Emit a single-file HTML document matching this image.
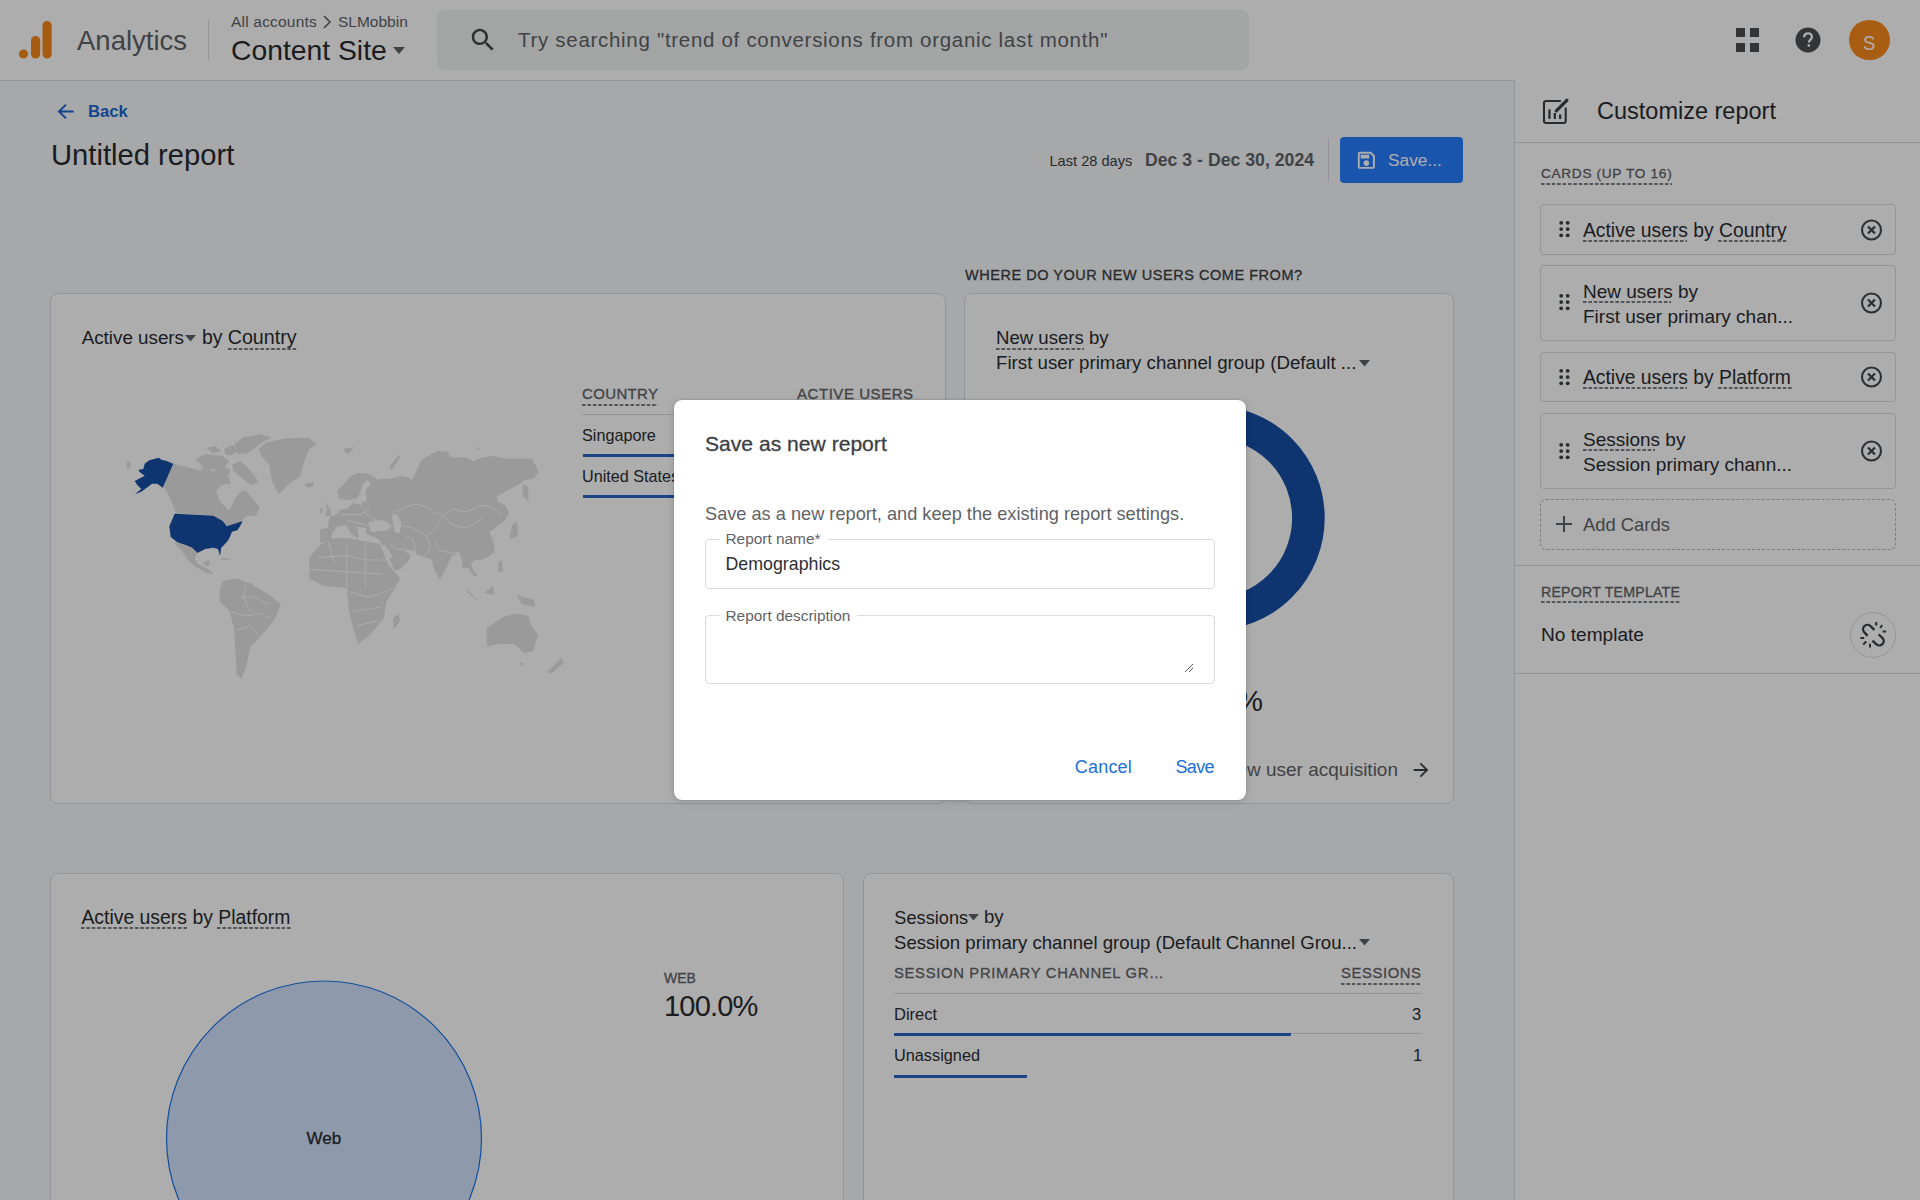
<!DOCTYPE html><html><head><meta charset="utf-8"><style>
html,body{margin:0;padding:0}
body{width:1920px;height:1200px;overflow:hidden;position:relative;background:#f7f8fb;font-family:"Liberation Sans",sans-serif}
.a{position:absolute;box-sizing:border-box}
.t{position:absolute;line-height:1;white-space:nowrap}
.dash{background-image:linear-gradient(to right,#7b7f84 3.2px,transparent 3.2px);background-size:5.4px 2px;background-repeat:repeat-x;height:2px;position:absolute}
.m{-webkit-text-stroke:0.3px currentColor}
</style></head><body>
<div class="a" style="left:0px;top:0px;width:1920px;height:81px;background:#fff;border-bottom:1px solid #dadce0"></div>
<svg class="a" style="left:0;top:0" width="60" height="80"><g fill="#f7891a"><circle cx="23.5" cy="54" r="4.6"/><rect x="31" y="36" width="9.2" height="22.5" rx="4.6"/><rect x="42.5" y="21" width="9.2" height="37.5" rx="4.6"/></g></svg>
<div class="t " style="left:77.0px;top:27.32px;font-size:27.5px;color:#5f6368;">Analytics</div>
<div class="a" style="left:208px;top:20px;width:1px;height:40px;background:#dadce0"></div>
<div class="t " style="left:231.0px;top:14.48px;font-size:15.5px;color:#5f6368;letter-spacing:0.2px;">All accounts</div>
<svg class="a" style="left:321px;top:14px" width="12" height="16"><path d="M3 2 L9 8 L3 14" fill="none" stroke="#5f6368" stroke-width="1.6"/></svg>
<div class="t " style="left:338.0px;top:14.48px;font-size:15.5px;color:#5f6368;">SLMobbin</div>
<div class="t " style="left:231.0px;top:36.04px;font-size:28.3px;color:#2a2c30;">Content Site</div>
<svg class="a" style="left:393px;top:47px" width="14" height="8"><path d="M0 0 L12 0 L6 7 Z" fill="#5f6368"/></svg>
<div class="a" style="left:437px;top:10px;width:812px;height:60px;background:#f1f3f4;border-radius:8px"></div>
<svg class="a" style="left:467.5px;top:25px" width="30" height="30" viewBox="0 0 24 24"><path fill="#444746" d="M15.5 14h-.79l-.28-.27C15.41 12.59 16 11.11 16 9.5 16 5.91 13.09 3 9.5 3S3 5.91 3 9.5 5.91 16 9.5 16c1.61 0 3.09-.59 4.23-1.57l.27.28v.79l5 4.99L20.49 19l-4.99-5zm-6 0C7.01 14 5 11.99 5 9.5S7.01 5 9.5 5 14 7.01 14 9.5 11.99 14 9.5 14z"/></svg>
<div class="t " style="left:518.0px;top:30.25px;font-size:20.5px;color:#5f6368;letter-spacing:0.7px;">Try searching "trend of conversions from organic last month"</div>
<div class="a" style="left:1736px;top:28px;width:9px;height:9px;background:#4a4d50"></div>
<div class="a" style="left:1750px;top:28px;width:9px;height:9px;background:#4a4d50"></div>
<div class="a" style="left:1736px;top:43px;width:9px;height:9px;background:#4a4d50"></div>
<div class="a" style="left:1750px;top:43px;width:9px;height:9px;background:#4a4d50"></div>
<svg class="a" style="left:1795px;top:27px" width="26" height="26" viewBox="0 0 26 26"><circle cx="13" cy="13" r="12.5" fill="#4a4d50"/><path d="M9.2 10.3 C9.2 7.8 11 6.4 13.1 6.4 C15.3 6.4 16.9 7.9 16.9 9.9 C16.9 12.5 13.9 12.7 13.9 15.6" fill="none" stroke="#fff" stroke-width="2.4"/><rect x="12.6" y="17.3" width="2.4" height="2.4" fill="#fff"/></svg>
<div class="a" style="left:1849px;top:19.8px;width:40.5px;height:40.5px;border-radius:50%;background:#f98a1b"></div>
<div class="t " style="left:1863.0px;top:31.82px;font-size:21px;color:#fff;transform:scaleX(0.88);transform-origin:left">S</div>
<svg class="a" style="left:0;top:90px" width="90" height="40"><path d="M73.6 21.5 H59.5 M66 14.6 L59 21.5 L66 28.4" fill="none" stroke="#1967d2" stroke-width="2"/></svg>
<div class="t " style="left:88.0px;top:103.76px;font-size:16.7px;color:#1967d2;font-weight:700;">Back</div>
<div class="t " style="left:51.0px;top:140.88px;font-size:29.2px;color:#2a2c30;">Untitled report</div>
<div class="t " style="left:1049.5px;top:153.84px;font-size:14.6px;color:#3c4043;">Last 28 days</div>
<div class="t " style="left:1145.0px;top:151.62px;font-size:17.7px;color:#5f6368;font-weight:700;">Dec 3 - Dec 30, 2024</div>
<div class="a" style="left:1328px;top:138px;width:1px;height:44px;background:#dadce0"></div>
<div class="a" style="left:1340px;top:137px;width:123px;height:46px;background:#267dff;border-radius:4px"></div>
<svg class="a" style="left:1355px;top:148.9px" width="22.7" height="22.7" viewBox="0 0 24 24"><path fill="#fff" d="M17 3H5c-1.11 0-2 .9-2 2v14c0 1.1.89 2 2 2h14c1.1 0 2-.9 2-2V7l-4-4zm2 16H5V5h11.17L19 7.83V19zm-7-7c-1.66 0-3 1.34-3 3s1.34 3 3 3 3-1.34 3-3-1.34-3-3-3zM6 6h9v4H6z"/></svg>
<div class="t " style="left:1388.0px;top:151.56px;font-size:17.3px;color:#fff;">Save...</div>
<div class="t m" style="left:965.0px;top:267.73px;font-size:14.5px;color:#3c4043;letter-spacing:0.53px;">WHERE DO YOUR NEW USERS COME FROM?</div>
<div class="a" style="left:50px;top:293px;width:896px;height:511px;background:#fff;border:1px solid #dadce0;border-radius:8px"></div>
<div class="a" style="left:964px;top:293px;width:490px;height:511px;background:#fff;border:1px solid #dadce0;border-radius:8px"></div>
<div class="a" style="left:50px;top:873px;width:794px;height:400px;background:#fff;border:1px solid #dadce0;border-radius:8px"></div>
<div class="a" style="left:863px;top:873px;width:591px;height:400px;background:#fff;border:1px solid #dadce0;border-radius:8px"></div>
<div class="t " style="left:81.7px;top:328.69px;font-size:18.8px;color:#2a2c30;">Active users</div>
<svg class="a" style="left:185px;top:335px" width="12" height="7"><path d="M0 0 L11 0 L5.5 6.5Z" fill="#5f6368"/></svg>
<div class="t " style="left:202.0px;top:328.18px;font-size:19.4px;color:#2a2c30;">by</div>
<div class="t " style="left:227.7px;top:327.92px;font-size:19.7px;color:#2a2c30;">Country</div>
<div class="dash" style="left:228px;top:348px;width:69px"></div>
<div class="t m" style="left:582.0px;top:385.90px;font-size:15px;color:#5f6368;letter-spacing:0.35px;">COUNTRY</div>
<div class="dash" style="left:582px;top:404px;width:76px"></div>
<div class="t m" style="left:797.0px;top:385.90px;font-size:15px;color:#5f6368;letter-spacing:0.55px;">ACTIVE USERS</div>
<div class="a" style="left:582px;top:414px;width:332px;height:1px;background:#dadce0"></div>
<div class="t " style="left:582.0px;top:426.89px;font-size:16.2px;color:#2a2c30;">Singapore</div>
<div class="a" style="left:582px;top:454px;width:332px;height:1px;background:#dadce0"></div>
<div class="a" style="left:583px;top:453.5px;width:331px;height:3px;background:#2863c4"></div>
<div class="t " style="left:582.0px;top:467.89px;font-size:16.2px;color:#2a2c30;">United States</div>
<div class="a" style="left:583px;top:494.5px;width:331px;height:3px;background:#2863c4"></div>
<svg class="a" style="left:0;top:0" width="1920" height="1200"><polygon points="173.3,463.7 184.0,466.3 194.7,469.0 200.0,470.3 205.3,467.7 213.3,471.7 221.3,475.7 229.3,477.0 230.7,483.7 221.3,485.0 216.0,491.7 220.0,502.3 229.3,510.3 234.7,499.7 240.0,491.7 245.3,490.3 253.3,499.7 260.0,507.7 256.0,515.7 246.7,515.7 240.0,522.3 234.7,526.3 226.7,526.3 222.7,521.0 213.3,515.7 176.0,513.0 170.7,499.7 165.3,489.0 162.7,487.7" fill="#e3e3e3"/><polygon points="232.0,465.0 240.0,461.0 248.0,467.7 254.7,475.7 258.7,482.3 252.0,485.0 245.3,481.0 237.3,474.3 233.3,470.3" fill="#e3e3e3"/><polygon points="194.7,459.7 205.3,454.3 221.3,455.7 229.3,461.0 224.0,469.0 213.3,469.0 202.7,465.0" fill="#e3e3e3"/><polygon points="234.7,443.7 244.0,437.0 261.3,434.3 270.7,437.7 258.7,445.0 248.0,453.0 237.3,454.3" fill="#e3e3e3"/><polygon points="206.7,447.7 216.0,446.3 221.3,451.7 212.0,453.0" fill="#e3e3e3"/><polygon points="213.3,470.3 221.3,466.3 230.7,469.7 228.0,476.3 217.3,476.3" fill="#e3e3e3"/><polygon points="200.0,465.0 210.7,463.7 214.0,469.0 205.3,471.0" fill="#e3e3e3"/><polygon points="224.0,449.0 233.3,445.0 237.3,451.7 230.7,455.7 225.3,454.3" fill="#e3e3e3"/><polygon points="258.7,449.0 266.7,442.3 286.7,438.3 308.0,437.7 317.3,443.7 309.3,449.0 304.0,462.3 300.0,477.0 290.7,482.3 278.7,494.3 272.0,481.0 269.3,465.0 261.3,455.7" fill="#e3e3e3"/><polygon points="305.3,483.7 313.3,482.3 313.3,486.3 306.7,487.7" fill="#e3e3e3"/><polygon points="126.7,461.0 130.7,462.3 130.0,469.0 126.7,467.7" fill="#e3e3e3"/><polygon points="134.7,481.0 140.0,478.3 144.7,475.7 139.3,471.7 138.7,469.7 143.3,469.0 144.7,463.7 149.3,460.3 158.7,457.7 161.3,459.7 166.7,461.0 173.3,463.7 162.7,487.7 157.3,483.7 152.0,483.7 146.7,487.7 141.3,491.7 134.7,494.3 141.3,489.0 137.3,485.0" fill="#174ea6"/><polygon points="174.7,513.7 176.0,513.7 213.3,515.7 222.7,521.0 226.7,526.3 234.7,523.7 242.7,521.0 240.0,526.3 237.3,530.3 232.0,531.7 229.3,538.3 226.7,542.3 221.3,547.7 220.0,555.7 218.0,549.0 213.3,547.7 205.3,549.0 197.3,553.0 192.0,547.7 185.3,545.0 177.3,542.3 170.7,537.0 169.3,526.3" fill="#174ea6"/><polygon points="173.3,542.3 185.3,545.0 192.0,547.7 197.3,553.0 194.7,558.3 197.3,563.7 202.7,566.3 208.0,569.0 213.3,574.3 206.7,573.0 194.7,566.3 186.7,558.3 181.3,550.3" fill="#e3e3e3"/><polygon points="202.7,563.7 208.0,559.7 210.7,563.7 206.7,566.3" fill="#e3e3e3"/><polygon points="222.7,581.0 236.6,578.6 250.6,583.3 269.3,595.0 281.0,604.3 274.0,620.6 260.0,637.0 250.6,646.3 246.0,667.3 241.3,679.0 236.6,674.3 235.5,653.3 234.3,630.0 229.6,611.3 220.3,602.0 219.2,592.6" fill="#e3e3e3"/><polygon points="222.7,557.6 232.0,560.0 220.3,560.0" fill="#e3e3e3"/><polyline points="229.6,611.3 246.0,616.0 260.0,613.6 271.6,618.3" fill="none" stroke="#fff" stroke-width="0.9" stroke-linejoin="round"/><polyline points="236.6,630.0 250.6,625.3 260.0,637.0" fill="none" stroke="#fff" stroke-width="0.9" stroke-linejoin="round"/><polyline points="241.3,597.3 255.3,597.3 269.3,604.3" fill="none" stroke="#fff" stroke-width="0.9" stroke-linejoin="round"/><polyline points="246.0,583.3 243.6,597.3 250.6,611.3" fill="none" stroke="#fff" stroke-width="0.9" stroke-linejoin="round"/><polygon points="320.0,542.7 320.0,529.3 328.0,528.0 329.3,517.3 337.3,514.0 340.0,509.3 346.7,508.7 352.0,504.0 356.0,498.7 346.7,500.0 338.7,498.7 337.3,490.7 344.0,484.0 349.3,477.3 357.3,472.7 365.3,473.3 373.3,476.0 377.3,480.0 382.7,478.7 389.3,478.7 400.0,476.0 408.0,477.3 412.0,480.0 416.0,472.0 421.3,460.0 437.3,450.7 448.0,452.0 450.7,457.3 466.7,457.3 473.3,461.3 482.7,457.3 493.3,456.0 506.7,458.7 522.7,458.7 532.0,458.7 538.7,472.0 533.3,478.7 525.3,480.0 517.3,485.3 512.0,488.0 497.3,496.0 497.3,501.3 505.3,505.3 509.3,513.3 504.0,521.3 496.0,526.7 489.3,532.0 493.3,541.3 494.7,552.0 488.0,557.3 480.0,560.0 474.7,560.0 470.7,564.0 473.3,570.7 477.3,574.7 474.7,577.3 468.0,568.0 462.7,568.0 461.3,557.3 458.7,553.3 452.0,556.0 446.7,566.7 440.0,580.0 433.3,568.0 432.0,560.0 425.3,557.3 417.3,554.7 410.7,554.7 409.3,560.0 400.0,569.3 394.7,570.7 389.3,558.7 381.3,545.3 373.3,546.7 360.0,546.7 344.0,544.0 332.0,541.3" fill="#e3e3e3"/><polygon points="353.3,504.0 360.0,493.3 362.7,484.0 368.0,480.0 370.7,484.0 365.3,490.7 366.7,498.7 362.7,502.7 358.7,504.0" fill="#fff"/><polygon points="332.0,541.3 332.0,533.3 337.3,526.7 346.7,525.3 350.7,533.3 358.7,538.7 357.3,526.7 366.7,528.0 365.3,533.3 380.0,540.0 381.3,545.3 360.0,546.7 344.0,544.0" fill="#fff"/><polygon points="368.0,522.7 376.0,520.0 386.7,521.3 392.0,526.7 386.7,530.7 370.7,532.0" fill="#fff"/><polygon points="392.0,514.7 397.3,514.7 401.3,522.7 400.0,533.3 394.7,532.0 393.3,525.3" fill="#fff"/><polygon points="405.3,549.3 413.3,550.7 417.3,554.7 410.7,554.7 405.3,552.0" fill="#fff"/><polygon points="381.3,545.3 389.3,558.7 392.7,556.7 384.7,544.7" fill="#fff"/><polygon points="325.3,501.3 330.7,510.7 330.7,516.0 325.3,516.0 326.7,509.3" fill="#e3e3e3"/><polygon points="320.0,509.3 322.7,508.0 322.7,513.3 320.0,513.3" fill="#e3e3e3"/><polygon points="389.3,466.7 398.7,454.7 400.7,456.7 392.0,470.0" fill="#e3e3e3"/><polygon points="342.7,449.3 354.7,446.7 348.0,454.7" fill="#e3e3e3"/><polygon points="476.0,447.3 482.0,448.0 478.7,450.0" fill="#e3e3e3"/><polygon points="522.7,484.0 528.0,486.7 528.7,501.3 522.7,496.0" fill="#e3e3e3"/><polygon points="512.0,525.3 516.7,521.3 518.0,536.0 509.3,539.3" fill="#e3e3e3"/><polyline points="390.7,514.7 394.7,512.0 406.7,506.7 416.0,504.0 426.7,506.7 433.3,512.0 442.7,514.7" fill="none" stroke="#fff" stroke-width="0.9" stroke-linejoin="round"/><polyline points="442.7,514.7 453.3,509.3 466.7,512.0 480.0,505.3 490.7,506.7 501.3,514.7" fill="none" stroke="#fff" stroke-width="0.9" stroke-linejoin="round"/><polyline points="442.7,516.0 453.3,525.3 466.7,528.0 480.0,520.0 482.7,517.3" fill="none" stroke="#fff" stroke-width="0.9" stroke-linejoin="round"/><polyline points="442.7,516.0 437.3,525.3 430.7,533.3 426.7,536.0" fill="none" stroke="#fff" stroke-width="0.9" stroke-linejoin="round"/><polyline points="402.7,525.3 413.3,528.0 421.3,533.3 426.7,536.0" fill="none" stroke="#fff" stroke-width="0.9" stroke-linejoin="round"/><polyline points="434.7,541.3 440.0,550.7 453.3,553.3 460.0,552.0" fill="none" stroke="#fff" stroke-width="0.9" stroke-linejoin="round"/><polyline points="426.7,536.0 430.7,546.7 425.3,556.0" fill="none" stroke="#fff" stroke-width="0.9" stroke-linejoin="round"/><polyline points="405.3,536.0 413.3,540.0 416.0,554.7" fill="none" stroke="#fff" stroke-width="0.9" stroke-linejoin="round"/><polyline points="389.3,541.3 394.7,549.3 405.3,549.3" fill="none" stroke="#fff" stroke-width="0.9" stroke-linejoin="round"/><polyline points="340.0,514.7 360.0,514.7 370.7,509.3" fill="none" stroke="#fff" stroke-width="0.9" stroke-linejoin="round"/><polyline points="346.7,520.0 366.7,525.3" fill="none" stroke="#fff" stroke-width="0.9" stroke-linejoin="round"/><polyline points="360.0,502.7 366.7,514.7 376.0,520.0" fill="none" stroke="#fff" stroke-width="0.9" stroke-linejoin="round"/><polyline points="365.3,490.7 365.3,502.7" fill="none" stroke="#fff" stroke-width="0.9" stroke-linejoin="round"/><polygon points="309.3,557.7 318.7,546.0 330.3,539.0 346.7,537.8 365.3,541.3 379.3,543.7 388.7,564.7 400.3,578.7 393.3,590.3 386.3,602.0 384.0,618.3 370.0,634.7 358.3,644.0 353.7,630.0 349.0,611.3 346.7,588.0 323.3,585.7 309.3,578.7" fill="#e3e3e3"/><polygon points="393.3,618.3 398.0,613.7 400.3,620.7 393.3,630.0" fill="#e3e3e3"/><polygon points="465.7,588.0 477.3,599.7 482.0,604.3 468.0,592.7" fill="#e3e3e3"/><polygon points="484.3,592.7 493.7,585.7 493.7,595.0" fill="#e3e3e3"/><polygon points="517.0,595.0 533.3,599.7 535.7,606.7 521.7,604.3" fill="#e3e3e3"/><polygon points="498.3,562.3 501.8,560.0 503.0,571.7 498.3,571.7" fill="#e3e3e3"/><polygon points="486.7,627.7 505.3,616.0 517.0,613.7 528.7,616.0 531.0,625.3 538.0,634.7 533.3,651.0 524.0,653.3 514.7,644.0 500.7,644.0 486.7,646.3" fill="#e3e3e3"/><polygon points="547.3,672.0 561.3,658.0 563.7,662.7 552.0,673.2" fill="#e3e3e3"/><polygon points="519.3,662.7 523.5,662.7 521.7,667.3" fill="#e3e3e3"/><polyline points="318.7,557.7 346.7,555.3 365.3,560.0 388.7,560.0" fill="none" stroke="#fff" stroke-width="0.9" stroke-linejoin="round"/><polyline points="309.3,569.3 346.7,571.7 381.7,574.0" fill="none" stroke="#fff" stroke-width="0.9" stroke-linejoin="round"/><polyline points="346.7,546.0 346.7,588.0" fill="none" stroke="#fff" stroke-width="0.9" stroke-linejoin="round"/><polyline points="365.3,541.3 365.3,588.0" fill="none" stroke="#fff" stroke-width="0.9" stroke-linejoin="round"/><polyline points="335.0,588.0 370.0,597.3 393.3,588.0" fill="none" stroke="#fff" stroke-width="0.9" stroke-linejoin="round"/><polyline points="353.7,611.3 381.7,606.7" fill="none" stroke="#fff" stroke-width="0.9" stroke-linejoin="round"/><polyline points="358.3,625.3 379.3,620.7" fill="none" stroke="#fff" stroke-width="0.9" stroke-linejoin="round"/><polyline points="328.0,541.3 335.0,564.7" fill="none" stroke="#fff" stroke-width="0.9" stroke-linejoin="round"/></svg>
<div class="t " style="left:996.0px;top:328.86px;font-size:18.6px;color:#2a2c30;">New users by</div>
<div class="dash" style="left:996px;top:348px;width:88px"></div>
<div class="t " style="left:996.0px;top:354.47px;font-size:18.7px;color:#2a2c30;">First user primary channel group (Default ...</div>
<svg class="a" style="left:1359px;top:360px" width="12" height="7"><path d="M0 0 L11 0 L5.5 6.5Z" fill="#5f6368"/></svg>
<svg class="a" style="left:0;top:0" width="1920" height="1200"><circle cx="1212.2" cy="518" r="96.2" fill="none" stroke="#174ea6" stroke-width="32.6"/></svg>
<div class="t " style="right:657.0px;top:685.93px;font-size:29.5px;color:#2a2c30;">100.0%</div>
<div class="t " style="right:522.0px;top:759.52px;font-size:19px;color:#5f6368;">View new user acquisition</div>
<svg class="a" style="left:1410px;top:759px" width="22" height="22" viewBox="0 0 24 24"><path fill="#3c4043" d="M12 4l-1.41 1.41L16.17 11H4v2h12.17l-5.58 5.59L12 20l8-8z"/></svg>
<div class="t " style="left:81.4px;top:908.18px;font-size:19.4px;color:#2a2c30;">Active users by Platform</div>
<div class="dash" style="left:81px;top:927px;width:106px"></div>
<div class="dash" style="left:217px;top:927px;width:74px"></div>
<div class="t m" style="left:664.0px;top:971.35px;font-size:14px;color:#5f6368;">WEB</div>
<div class="t " style="left:664.0px;top:991.55px;font-size:29px;color:#2a2c30;letter-spacing:-0.8px;">100.0%</div>
<svg class="a" style="left:0;top:0" width="1920" height="1200"><circle cx="324" cy="1138.5" r="157.5" fill="#d2e3fc" stroke="#1a73e8" stroke-width="1.2"/></svg>
<div class="t m" style="left:306.5px;top:1130.21px;font-size:17px;color:#2a2c30;">Web</div>
<div class="t " style="left:894.3px;top:908.69px;font-size:18.2px;color:#2a2c30;">Sessions</div>
<svg class="a" style="left:968px;top:914px" width="12" height="7"><path d="M0 0 L11 0 L5.5 6.5Z" fill="#5f6368"/></svg>
<div class="t " style="left:984.0px;top:908.36px;font-size:18.6px;color:#2a2c30;">by</div>
<div class="t " style="left:894.0px;top:933.86px;font-size:18.6px;color:#2a2c30;">Session primary channel group (Default Channel Grou...</div>
<svg class="a" style="left:1359px;top:939px" width="12" height="7"><path d="M0 0 L11 0 L5.5 6.5Z" fill="#5f6368"/></svg>
<div class="t m" style="left:894.0px;top:965.77px;font-size:14.8px;color:#5f6368;letter-spacing:0.68px;">SESSION PRIMARY CHANNEL GR…</div>
<div class="t m" style="left:1341.0px;top:965.77px;font-size:14.8px;color:#5f6368;letter-spacing:0.61px;">SESSIONS</div>
<div class="dash" style="left:1341px;top:983px;width:80px"></div>
<div class="a" style="left:894px;top:993px;width:528px;height:1px;background:#dadce0"></div>
<div class="t " style="left:894.0px;top:1006.43px;font-size:16.5px;color:#2a2c30;">Direct</div>
<div class="t " style="left:1412.0px;top:1006.43px;font-size:16.5px;color:#2a2c30;">3</div>
<div class="a" style="left:894px;top:1033px;width:528px;height:1px;background:#dadce0"></div>
<div class="a" style="left:894px;top:1033px;width:397px;height:3px;background:#2863c4"></div>
<div class="t " style="left:894.0px;top:1047.40px;font-size:16.3px;color:#2a2c30;">Unassigned</div>
<div class="t " style="left:1413.0px;top:1047.23px;font-size:16.5px;color:#2a2c30;">1</div>
<div class="a" style="left:894px;top:1074.5px;width:133px;height:3px;background:#2863c4"></div>
<div class="a" style="left:1514px;top:80px;width:406px;height:1120px;background:#fff;border-left:1px solid #dadce0"></div>
<svg class="a" style="left:1535px;top:90px" width="45" height="45"><path d="M25.9 11 H11 A2 2 0 0 0 9 13 V31 A2 2 0 0 0 11 33 H28.7 A2 2 0 0 0 30.7 31 V17.5" fill="none" stroke="#3c4043" stroke-width="2.1"/><g fill="#3c4043"><rect x="13.3" y="19.4" width="2.3" height="9.5"/><rect x="18.7" y="23" width="2.3" height="5.9"/><rect x="24" y="24.4" width="2.3" height="4.5"/></g><path d="M21.3 20.9 L29.3 12.9 M30.3 11.9 L31.9 10.3" stroke="#3c4043" stroke-width="3.2" stroke-linecap="round"/></svg>
<div class="t " style="left:1597.0px;top:99.91px;font-size:23.5px;color:#2a2c30;">Customize report</div>
<div class="a" style="left:1515px;top:142px;width:405px;height:1px;background:#dadce0"></div>
<div class="t m" style="left:1541.0px;top:167.30px;font-size:13.7px;color:#5f6368;letter-spacing:0.65px;">CARDS (UP TO 16)</div>
<div class="dash" style="left:1541px;top:183px;width:131px"></div>
<div class="a" style="left:1540px;top:204px;width:356px;height:51px;border:1px solid #dadce0;border-radius:4px"></div>
<div class="a" style="left:1540px;top:265px;width:356px;height:76px;border:1px solid #dadce0;border-radius:4px"></div>
<div class="a" style="left:1540px;top:352px;width:356px;height:50px;border:1px solid #dadce0;border-radius:4px"></div>
<div class="a" style="left:1540px;top:413px;width:356px;height:76px;border:1px solid #dadce0;border-radius:4px"></div>
<svg class="a" style="left:0;top:0" width="1920" height="1200"><circle cx="1561.2" cy="222.8" r="1.9" fill="#3c4043"/><circle cx="1567.7" cy="222.8" r="1.9" fill="#3c4043"/><circle cx="1561.2" cy="229.1" r="1.9" fill="#3c4043"/><circle cx="1567.7" cy="229.1" r="1.9" fill="#3c4043"/><circle cx="1561.2" cy="235.3" r="1.9" fill="#3c4043"/><circle cx="1567.7" cy="235.3" r="1.9" fill="#3c4043"/><circle cx="1561.2" cy="295.8" r="1.9" fill="#3c4043"/><circle cx="1567.7" cy="295.8" r="1.9" fill="#3c4043"/><circle cx="1561.2" cy="302.1" r="1.9" fill="#3c4043"/><circle cx="1567.7" cy="302.1" r="1.9" fill="#3c4043"/><circle cx="1561.2" cy="308.3" r="1.9" fill="#3c4043"/><circle cx="1567.7" cy="308.3" r="1.9" fill="#3c4043"/><circle cx="1561.2" cy="370.8" r="1.9" fill="#3c4043"/><circle cx="1567.7" cy="370.8" r="1.9" fill="#3c4043"/><circle cx="1561.2" cy="377.1" r="1.9" fill="#3c4043"/><circle cx="1567.7" cy="377.1" r="1.9" fill="#3c4043"/><circle cx="1561.2" cy="383.3" r="1.9" fill="#3c4043"/><circle cx="1567.7" cy="383.3" r="1.9" fill="#3c4043"/><circle cx="1561.2" cy="444.8" r="1.9" fill="#3c4043"/><circle cx="1567.7" cy="444.8" r="1.9" fill="#3c4043"/><circle cx="1561.2" cy="451.1" r="1.9" fill="#3c4043"/><circle cx="1567.7" cy="451.1" r="1.9" fill="#3c4043"/><circle cx="1561.2" cy="457.3" r="1.9" fill="#3c4043"/><circle cx="1567.7" cy="457.3" r="1.9" fill="#3c4043"/><circle cx="1871.5" cy="230" r="9.5" fill="none" stroke="#45494d" stroke-width="2.1"/><path d="M1868.0 226.5 L1875.0 233.5 M1875.0 226.5 L1868.0 233.5" stroke="#45494d" stroke-width="2.4"/><circle cx="1871.5" cy="303" r="9.5" fill="none" stroke="#45494d" stroke-width="2.1"/><path d="M1868.0 299.5 L1875.0 306.5 M1875.0 299.5 L1868.0 306.5" stroke="#45494d" stroke-width="2.4"/><circle cx="1871.5" cy="377" r="9.5" fill="none" stroke="#45494d" stroke-width="2.1"/><path d="M1868.0 373.5 L1875.0 380.5 M1875.0 373.5 L1868.0 380.5" stroke="#45494d" stroke-width="2.4"/><circle cx="1871.5" cy="451" r="9.5" fill="none" stroke="#45494d" stroke-width="2.1"/><path d="M1868.0 447.5 L1875.0 454.5 M1875.0 447.5 L1868.0 454.5" stroke="#45494d" stroke-width="2.4"/></svg>
<div class="t " style="left:1583.0px;top:220.96px;font-size:19.3px;color:#2a2c30;">Active users by Country</div>
<div class="dash" style="left:1583px;top:240px;width:104px"></div>
<div class="dash" style="left:1718px;top:240px;width:69px"></div>
<div class="t " style="left:1583.0px;top:281.52px;font-size:19px;color:#2a2c30;">New users by</div>
<div class="dash" style="left:1583px;top:301px;width:88px"></div>
<div class="t " style="left:1583.0px;top:307.02px;font-size:19px;color:#2a2c30;">First user primary chan...</div>
<div class="t " style="left:1583.0px;top:367.96px;font-size:19.3px;color:#2a2c30;">Active users by Platform</div>
<div class="dash" style="left:1583px;top:387px;width:104px"></div>
<div class="dash" style="left:1718px;top:387px;width:74px"></div>
<div class="t " style="left:1583.0px;top:429.52px;font-size:19px;color:#2a2c30;">Sessions by</div>
<div class="dash" style="left:1583px;top:449px;width:72px"></div>
<div class="t " style="left:1583.0px;top:454.52px;font-size:19px;color:#2a2c30;">Session primary chann...</div>
<div class="a" style="left:1540px;top:499px;width:356px;height:51px;border:1.5px dashed #b5b9be;border-radius:6px"></div>
<svg class="a" style="left:1554px;top:514px" width="20" height="20"><path d="M10 2 V18 M2 10 H18" stroke="#5f6368" stroke-width="2"/></svg>
<div class="t " style="left:1583.0px;top:515.82px;font-size:18.4px;color:#5f6368;">Add Cards</div>
<div class="a" style="left:1515px;top:565px;width:405px;height:1px;background:#dadce0"></div>
<div class="t m" style="left:1541.0px;top:585.18px;font-size:14.2px;color:#5f6368;letter-spacing:0.2px;">REPORT TEMPLATE</div>
<div class="dash" style="left:1541px;top:601px;width:139px"></div>
<div class="t " style="left:1541.0px;top:625.43px;font-size:19.1px;color:#2a2c30;">No template</div>
<div class="a" style="left:1850px;top:612px;width:46px;height:46px;border-radius:50%;border:1px solid #dadce0"></div>
<svg class="a" style="left:1840px;top:600px" width="70" height="70"><g fill="none" stroke="#3c4043" stroke-width="2.3"><path d="M34.4 29.8 L30.3 25.9 A4.4 4.4 0 0 0 24.1 32.1 L27.6 35.9"/><path d="M32.4 40.6 L36.5 44.4 A4.4 4.4 0 0 0 42.7 38.2 L38.6 34.4"/></g><g stroke="#3c4043" stroke-width="2"><path d="M36.2 22 V25.6 M42.2 25 L40.2 28 M42.6 31.6 H46.2 M20.4 37.9 H24.2 M23.3 44.5 L26.3 41.4 M30 43.8 V47.6"/></g></svg>
<div class="a" style="left:1515px;top:673px;width:405px;height:1px;background:#dadce0"></div>
<div class="a" style="left:0px;top:0px;width:1920px;height:1200px;background:rgba(0,0,0,0.32)"></div>
<div class="a" style="left:674px;top:400px;width:572px;height:400px;background:#fff;border-radius:8px;box-shadow:0 0 1.5px rgba(0,0,0,.35),0 2px 8px rgba(0,0,0,.12)"></div>
<div class="t m" style="left:705.0px;top:432.94px;font-size:21.1px;color:#3c4043;">Save as new report</div>
<div class="t " style="left:705.0px;top:505.39px;font-size:18.2px;color:#5f6368;">Save as a new report, and keep the existing report settings.</div>
<div class="a" style="left:705px;top:539px;width:510px;height:50px;border:1px solid #dadce0;border-radius:4px"></div>
<div class="a" style="left:720px;top:535px;width:107px;height:8px;background:#fff"></div>
<div class="t " style="left:725.5px;top:531.06px;font-size:15.4px;color:#5f6368;">Report name*</div>
<div class="t " style="left:725.5px;top:555.83px;font-size:17.8px;color:#2d2f33;">Demographics</div>
<div class="a" style="left:705px;top:615px;width:510px;height:69px;border:1px solid #dadce0;border-radius:4px"></div>
<div class="a" style="left:720px;top:611px;width:137px;height:8px;background:#fff"></div>
<div class="t " style="left:725.5px;top:607.86px;font-size:15.4px;color:#5f6368;">Report description</div>
<svg class="a" style="left:1183px;top:662px" width="12" height="12"><path d="M2 10 L10 2 M6 10 L10 6" stroke="#5f6368" stroke-width="1"/></svg>
<div class="t " style="left:1074.8px;top:758.36px;font-size:18px;color:#1b6fd9;letter-spacing:0.2px;">Cancel</div>
<div class="t " style="left:1175.5px;top:758.36px;font-size:18px;color:#1b6fd9;letter-spacing:-0.65px;">Save</div>
</body></html>
